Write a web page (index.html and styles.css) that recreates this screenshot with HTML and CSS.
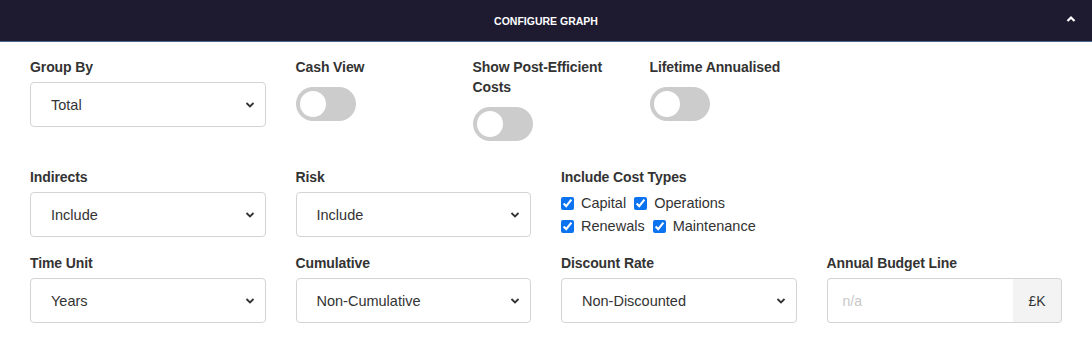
FILE: index.html
```html
<!DOCTYPE html>
<html>
<head>
	<title>Configure Graph</title>
	<meta charset="utf-8">
	<link rel="stylesheet" href="styles.css">
</head>
<body>
<div class="panel">
	<div class="panel-head">
		<span class="panel-title">CONFIGURE GRAPH</span>
		<svg class="caret" width="10" height="8" viewBox="0 0 10 8"><path d="M1.5 6 L5 2.5 L8.5 6" fill="none" stroke="#fff" stroke-width="2.2"/></svg>
	</div>
	<div class="panel-body">
		<div class="field col-3">
			<label class="lbl">Group By</label>
			<div class="select-wrap">
				<select class="sel"><option>Total</option></select>
				<svg class="arrow" width="10" height="6" viewBox="0 0 10 6"><path d="M1.5 1 L5 4.5 L8.5 1" fill="none" stroke="#333" stroke-width="1.8"/></svg>
			</div>
		</div>
		<div class="field col-2">
			<label class="lbl">Cash View</label>
			<div class="toggle"><span class="knob"></span></div>
		</div>
		<div class="field col-2">
			<label class="lbl">Show Post-Efficient<br>Costs</label>
			<div class="toggle"><span class="knob"></span></div>
		</div>
		<div class="field col-2">
			<label class="lbl">Lifetime Annualised</label>
			<div class="toggle"><span class="knob"></span></div>
		</div>
		<div class="field col-3"></div>

		<div class="field col-3">
			<label class="lbl">Indirects</label>
			<div class="select-wrap">
				<select class="sel"><option>Include</option></select>
				<svg class="arrow" width="10" height="6" viewBox="0 0 10 6"><path d="M1.5 1 L5 4.5 L8.5 1" fill="none" stroke="#333" stroke-width="1.8"/></svg>
			</div>
		</div>
		<div class="field col-3">
			<label class="lbl">Risk</label>
			<div class="select-wrap">
				<select class="sel"><option>Include</option></select>
				<svg class="arrow" width="10" height="6" viewBox="0 0 10 6"><path d="M1.5 1 L5 4.5 L8.5 1" fill="none" stroke="#333" stroke-width="1.8"/></svg>
			</div>
		</div>
		<div class="field col-3">
			<label class="lbl">Include Cost Types</label>
			<div class="checks">
				<label class="chk"><input type="checkbox" checked> Capital</label>
				<label class="chk"><input type="checkbox" checked> Operations</label>
			</div>
			<div class="checks">
				<label class="chk"><input type="checkbox" checked> Renewals</label>
				<label class="chk"><input type="checkbox" checked> Maintenance</label>
			</div>
		</div>
		<div class="field col-3"></div>

		<div class="field col-3">
			<label class="lbl">Time Unit</label>
			<div class="select-wrap">
				<select class="sel"><option>Years</option></select>
				<svg class="arrow" width="10" height="6" viewBox="0 0 10 6"><path d="M1.5 1 L5 4.5 L8.5 1" fill="none" stroke="#333" stroke-width="1.8"/></svg>
			</div>
		</div>
		<div class="field col-3">
			<label class="lbl">Cumulative</label>
			<div class="select-wrap">
				<select class="sel"><option>Non-Cumulative</option></select>
				<svg class="arrow" width="10" height="6" viewBox="0 0 10 6"><path d="M1.5 1 L5 4.5 L8.5 1" fill="none" stroke="#333" stroke-width="1.8"/></svg>
			</div>
		</div>
		<div class="field col-3">
			<label class="lbl">Discount Rate</label>
			<div class="select-wrap">
				<select class="sel"><option>Non-Discounted</option></select>
				<svg class="arrow" width="10" height="6" viewBox="0 0 10 6"><path d="M1.5 1 L5 4.5 L8.5 1" fill="none" stroke="#333" stroke-width="1.8"/></svg>
			</div>
		</div>
		<div class="field col-3">
			<label class="lbl">Annual Budget Line</label>
			<div class="input-group">
				<input class="inp" type="text" placeholder="n/a">
				<span class="addon">£K</span>
			</div>
		</div>
	</div>
</div>
</body>
</html>
```

FILE: styles.css
```css
*{
	padding: 0;
	margin: 0;
	box-sizing: border-box;
}
body{
	font-family: "Liberation Sans", Arial, sans-serif;
	color: #333;
	background: #fff;
}
.panel-head{
	height: 42px;
	background: #1e1b31;
	border-bottom: 1px solid #4a6690;
	display: flex;
	align-items: center;
	justify-content: center;
	position: relative;
}
.panel-title{
	color: #fff;
	font-size: 10.5px;
	font-weight: bold;
}
.caret{
	position: absolute;
	right: 16px;
	top: 15px;
}
.panel-body{
	display: grid;
	grid-template-columns: repeat(12, minmax(0, 1fr));
	column-gap: 30px;
	padding: 15px 30px 0;
}
.col-2{
	grid-column: span 2;
}
.col-3{
	grid-column: span 3;
}
.field{
	margin-bottom: 16px;
	min-width: 0;
}
.lbl{
	display: block;
	font-size: 14px;
	font-weight: bold;
	line-height: 20px;
	margin-bottom: 5px;
	letter-spacing: -0.1px;
}
.select-wrap{
	position: relative;
}
.sel{
	appearance: none;
	-webkit-appearance: none;
	width: 100%;
	height: 45px;
	border: 1px solid #d4d4d4;
	border-radius: 4px;
	background: #fff;
	padding: 0 30px 0 20px;
	font-family: "Liberation Sans", Arial, sans-serif;
	font-size: 14.5px;
	color: #333;
}
.arrow{
	position: absolute;
	right: 11px;
	top: 20px;
	pointer-events: none;
}
.toggle{
	width: 60px;
	height: 34px;
	border-radius: 17px;
	background: #ccc;
	margin-top: 10px;
	margin-bottom: 10px;
	position: relative;
}
.knob{
	position: absolute;
	left: 4px;
	top: 4px;
	width: 26px;
	height: 26px;
	border-radius: 50%;
	background: #fff;
}
.checks{
	display: flex;
	height: 22px;
	align-items: center;
	margin-top: 1px;
}
.chk{
	display: flex;
	align-items: center;
	font-size: 14.5px;
	margin-right: 8px;
}
.chk input{
	width: 13px;
	height: 13px;
	margin: 0 7px 0 0;
	accent-color: #0b72f0;
}
.input-group{
	display: flex;
	height: 45px;
}
.inp{
	flex: 1;
	width: 0;
	min-width: 0;
	border: 1px solid #d4d4d4;
	border-right: none;
	border-radius: 4px 0 0 4px;
	padding: 0 15px;
	font-family: "Liberation Sans", Arial, sans-serif;
	font-size: 14px;
	color: #333;
}
.inp::placeholder{
	color: #c8c8c8;
}
.addon{
	width: 49px;
	display: flex;
	align-items: center;
	justify-content: center;
	background: #f3f3f3;
	border: 1px solid #d4d4d4;
	border-left: none;
	border-radius: 0 4px 4px 0;
	font-size: 14px;
	color: #333;
}
```
